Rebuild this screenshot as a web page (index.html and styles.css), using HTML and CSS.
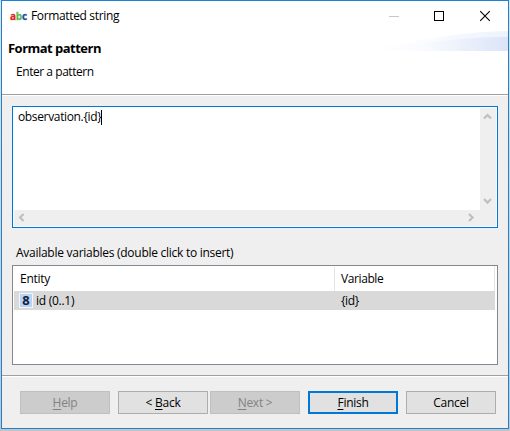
FILE: index.html
```html
<!DOCTYPE html>
<html lang="en">
<head>
<meta charset="utf-8">
<title>Formatted string</title>
<link rel="stylesheet" href="styles.css">
</head>
<body>
<div class="window">
  <header class="top">
    <svg class="swoosh" width="140" height="21" viewBox="0 0 140 21">
      <defs>
        <linearGradient id="sw"><stop offset="0" stop-color="#fff"/><stop offset=".4" stop-color="#f9fbff"/><stop offset="1" stop-color="#dbe4f7"/></linearGradient>
        <linearGradient id="sw2"><stop offset="0" stop-color="#fff"/><stop offset=".4" stop-color="#fbfcff"/><stop offset="1" stop-color="#edf2fc"/></linearGradient>
      </defs>
      <path d="M0 20C35 12 85 1 140 0V20Z" fill="url(#sw2)"/>
      <path d="M0 20C60 12 90 6 140 6V20Z" fill="url(#sw)"/>
    </svg>
    <div class="titlebar">
      <span class="abc"><b class="r">a</b><b class="g">b</b><b class="b">c</b></span>
      <span class="title">Formatted string</span>
      <svg class="controls" width="70" height="12" viewBox="0 0 70 12" shape-rendering="crispEdges">
        <path d="M1 6.5H11" stroke="#c8c8c8"/>
        <rect x="46.5" y="1.5" width="9" height="9" fill="none" stroke="#000"/>
      </svg>
      <svg class="close" width="12" height="12" viewBox="0 0 12 12"><path d="M1.2 1.2L10.8 10.8M10.8 1.2L1.2 10.8" stroke="#000" stroke-width="1.1"/></svg>
    </div>
    <h1 class="heading">Format pattern</h1>
    <p class="sub">Enter a pattern</p>
  </header>
  <main class="content">
    <div class="editor">
      <div class="input"><span class="value">observation.{id}</span><i class="caret"></i></div>
      <div class="vbar">
        <svg width="9" height="8" viewBox="0 0 9 8"><path d="M1 5.6L4.5 2L8 5.6" /></svg>
        <svg width="9" height="8" viewBox="0 0 9 8"><path d="M1 2L4.5 5.6L8 2" /></svg>
      </div>
      <div class="hbar">
        <svg width="8" height="9" viewBox="0 0 8 9"><path d="M5.6 1L2 4.5L5.6 8" /></svg>
        <svg width="8" height="9" viewBox="0 0 8 9"><path d="M2 1L5.6 4.5L2 8" /></svg>
      </div>
    </div>
    <div class="label"><span class="labeltext">Available variables (double click to insert)</span></div>
    <div class="table">
      <div class="row head"><span class="c1">Entity</span><span class="c2">Variable</span></div>
      <div class="row sel"><span class="c1"><b class="eight">8</b><span class="idt">id (0..1)</span></span><span class="c2">{id}</span></div>
    </div>
  </main>
  <footer class="buttons">
    <span class="btn off help"><span><u>H</u>elp</span></span>
    <span class="btn back"><span>&lt; <u>B</u>ack</span></span>
    <span class="btn off next"><span><u>N</u>ext &gt;</span></span>
    <span class="btn primary"><span><u>F</u>inish</span></span>
    <span class="btn cancel"><span>Cancel</span></span>
  </footer>
</div>
</body>
</html>
```

FILE: styles.css
```css
* { box-sizing: border-box; }
body {
  margin: 0;
  padding: 0 1px 2px;
  height: 431px;
  overflow: hidden;
  background: linear-gradient(#e2e2e2, #c4c4c4);
  font: 12px/16px "Open Sans", "Noto Sans", sans-serif;
  letter-spacing: -0.27px;
  color: #000;
}
.window {
  width: 508px;
  height: 429px;
  border: 1px solid #1883d7;
  background: #efefef;
  display: flex;
  flex-direction: column;
}
.top {
  position: relative;
  height: 95px;
  background: #fff;
  border-bottom: 1px solid #fff;
  box-shadow: inset 0 -1px #a0a0a0;
}
.swoosh { position: absolute; right: 0; top: 30px; }
.titlebar { display: flex; align-items: center; height: 29px; padding-left: 8px; }
.abc { width: 21px; font-size: 10px; letter-spacing: -0.25px; line-height: 14px; -webkit-text-stroke: 0.3px; }
.r { color: #e02818; }
.g { color: #56bd5c; }
.b { color: #284a9c; }
.title { flex: 1; letter-spacing: -0.35px; }
.controls { margin-right: 21px; flex: none; }
.close { margin-right: 17px; flex: none; }
.heading { margin: 10px 0 0 6px; font-size: 13px; line-height: 16px; letter-spacing: -0.52px; }
.sub { margin: 8px 0 0 14px; letter-spacing: -0.45px; }
.content { height: 281px; padding: 10px 10px 0; border-bottom: 1px solid #fff; box-shadow: inset 0 -1px #a0a0a0; }
.editor {
  width: 486px;
  height: 122px;
  border: 1px solid #0078d7;
  background: #fff;
  padding: 1px;
  display: grid;
  grid-template: 102px 16px / 466px 16px;
}
.input { display: flex; padding: 1px 0 0 4px; letter-spacing: -0.35px; }
.caret { width: 1px; height: 15px; margin-top: 1px; background: #000; }
.vbar {
  grid-row: 1 / 3;
  grid-column: 2;
  background: #efefef;
  display: flex;
  flex-direction: column;
  align-items: center;
  justify-content: space-between;
  padding: 5px 2px 21px 0;
}
.hbar {
  grid-row: 2;
  grid-column: 1;
  background: #efefef;
  display: flex;
  align-items: center;
  justify-content: space-between;
  padding: 0 5px 2px 4px;
}
.vbar path, .hbar path { fill: none; stroke: #bfbfbf; stroke-width: 2.2; }
.label { height: 37px; padding: 17px 0 0 4px; }
.table { height: 100px; width: 486px; border: 1px solid #828790; background: #fff; padding: 0 2px 0 1px; }
.row { display: flex; align-items: center; }
.c1 { width: 321px; display: flex; align-items: center; }
.head { height: 25px; padding-top: 1px; border-right: 1px solid #e5e5e5; }
.head .c1 { height: 24px; padding-left: 6px; border-right: 1px solid #e5e5e5; }
.c2 { padding-left: 6px; letter-spacing: -0.4px; }
.sel { height: 19px; background: #d9d9d9; }
.eight {
  width: 14px;
  height: 15px;
  margin: 0 3px 0 5px;
  border: 1px solid #f0f6fd;
  background: #b8d4f4;
  color: #16233c;
  font-size: 13px;
  letter-spacing: 0;
  line-height: 13px;
  text-align: center;
}
.buttons { display: flex; padding: 14px 0 0 18px; }
.btn {
  width: 90px;
  height: 23px;
  border: 1px solid #adadad;
  background: #e1e1e1;
  display: flex;
  align-items: center;
  justify-content: center;
  margin-right: 8px;
}
.btn.off { background: #ccc; border-color: #bfbfbf; color: #838383; }
.back { margin-right: 2px; }
.primary { border: 2px solid #0078d7; }
u { text-underline-offset: 2px; text-decoration-thickness: 1px; text-decoration-skip-ink: none; }
```
